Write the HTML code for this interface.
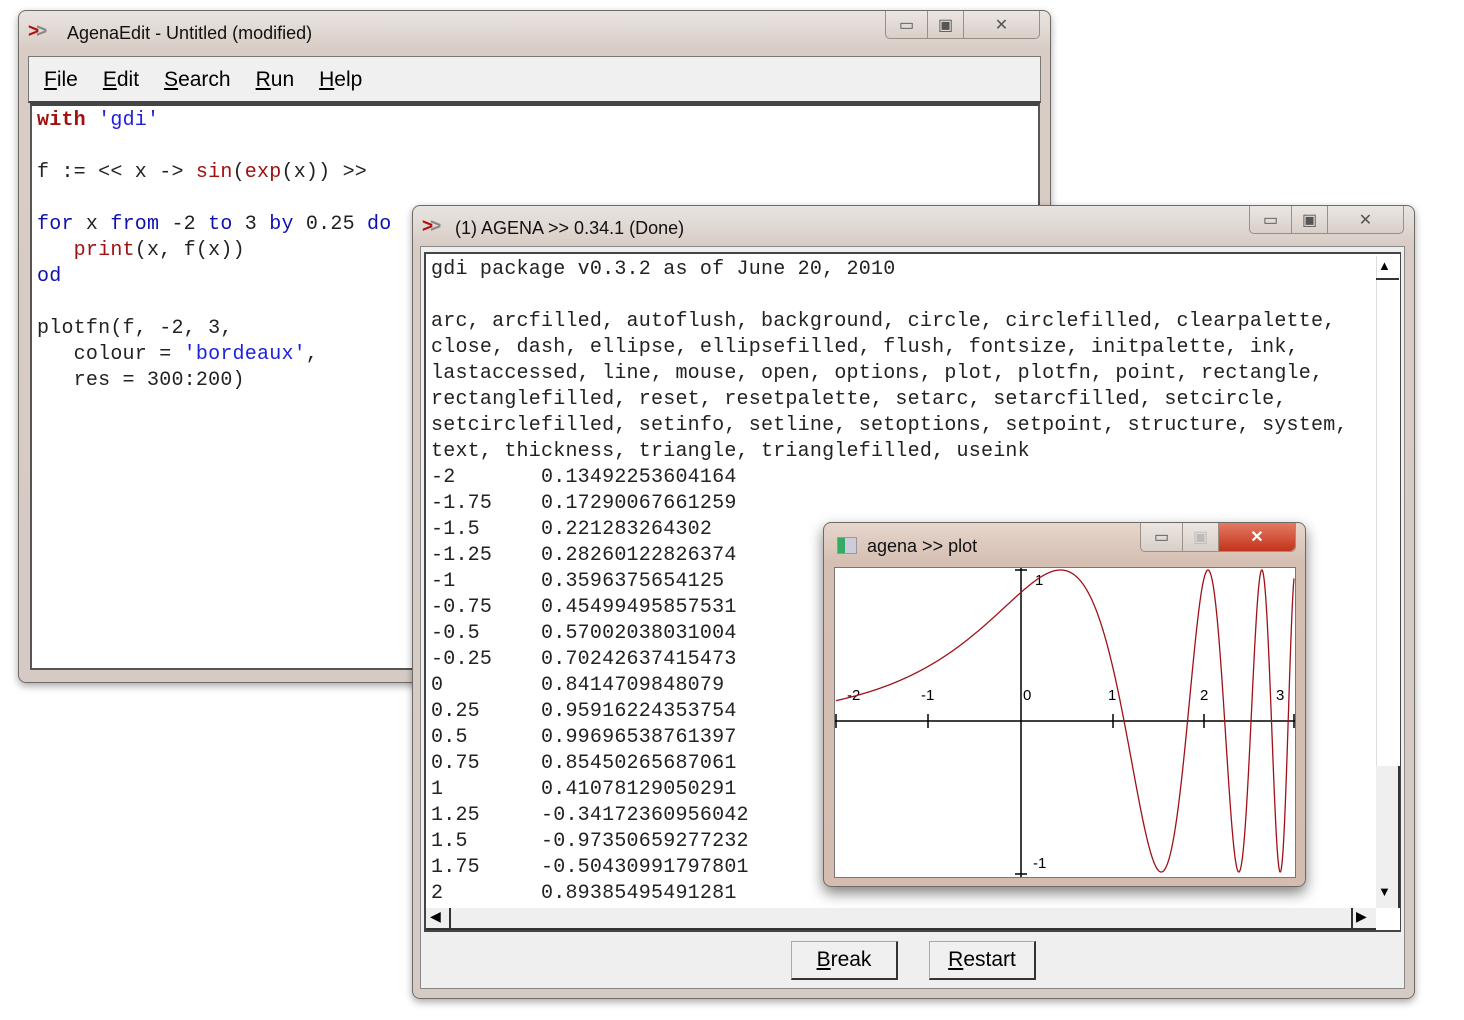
<!DOCTYPE html>
<html><head><meta charset="utf-8"><style>
*{margin:0;padding:0;box-sizing:border-box}
body{width:1464px;height:1020px;background:#fff;position:relative;overflow:hidden;font-family:"Liberation Sans",sans-serif}
.win{position:absolute;border:1px solid #6e6a66;border-radius:8px;background:linear-gradient(#e9e4e0,#d8ccc5 40px,#d6cbc4);box-shadow:0 3px 8px rgba(0,0,0,.35)}
.title{position:absolute;font-size:18px;color:#111}
.logo{position:absolute;font-weight:bold;font-size:19px;letter-spacing:-3px}
.logo b{color:#b01010}.logo i{font-style:normal;color:#888}
.ctl{position:absolute;height:28px;border:1px solid #9a9088;border-top:none;border-radius:0 0 5px 5px;background:linear-gradient(#ece6e2,#d9cfc9);display:flex}
.ctl div{border-right:1px solid #9a9088;display:flex;align-items:center;justify-content:center;font-size:16px;color:#555}
.ctl div:last-child{border-right:none}
.mono{font-family:"Liberation Mono",monospace;font-size:20px;line-height:26px;white-space:pre;color:#222;letter-spacing:0.22px}
.kw{color:#1010b0}.fn{color:#a01010}.st{color:#2020e0}
u{text-decoration:underline}
.menu span{margin-right:25px}
</style></head><body>

<!-- Editor window -->
<div class="win" style="left:18px;top:10px;width:1033px;height:673px">
  <div class="logo" style="left:9px;top:10px"><b>&gt;</b><i>&gt;</i></div>
  <div class="title" style="left:48px;top:12px">AgenaEdit - Untitled (modified)</div>
  <div class="ctl" style="left:866px;top:0;width:155px"><div style="width:42px">▭</div><div style="width:36px">▣</div><div style="flex:1">✕</div></div>
  <div class="menu" style="position:absolute;left:9px;top:45px;width:1013px;height:47px;background:#f0f0f0;border:1px solid #777;border-bottom:2px solid #444;font-size:21px;padding:11px 0 0 15px">
    <span><u>F</u>ile</span><span><u>E</u>dit</span><span><u>S</u>earch</span><span><u>R</u>un</span><span><u>H</u>elp</span>
  </div>
  <div style="position:absolute;left:11px;top:92px;width:1010px;height:567px;background:#fff;border:2px solid #555;border-top:3px solid #444"></div>
  <div class="mono" style="position:absolute;left:18px;top:97px"><span class="fn" style="font-weight:bold">with</span> <span class="st">'gdi'</span>

f := &lt;&lt; x -&gt; <span class="fn">sin</span>(<span class="fn">exp</span>(x)) &gt;&gt;

<span class="kw">for</span> x <span class="kw">from</span> -2 <span class="kw">to</span> 3 <span class="kw">by</span> 0.25 <span class="kw">do</span>
   <span class="fn">print</span>(x, f(x))
<span class="kw">od</span>

plotfn(f, -2, 3,
   colour = <span class="st">'bordeaux'</span>,
   res = 300:200)</div>
</div>

<!-- Agena window -->
<div class="win" style="left:412px;top:205px;width:1003px;height:794px">
  <div class="logo" style="left:9px;top:10px"><b>&gt;</b><i>&gt;</i></div>
  <div class="title" style="left:42px;top:12px">(1) AGENA &gt;&gt; 0.34.1 (Done)</div>
  <div class="ctl" style="left:836px;top:0;width:155px"><div style="width:42px">▭</div><div style="width:36px">▣</div><div style="flex:1">✕</div></div>
  <div style="position:absolute;left:7px;top:40px;width:985px;height:743px;background:#efefef;border:1px solid #888"></div>
  <div style="position:absolute;left:11px;top:46px;width:977px;height:680px;background:#fff;border:2px solid #444;border-right:1px solid #444"></div>
  <!-- vscroll -->
  <div style="position:absolute;left:963px;top:50px;width:23px;height:652px;background:#efefef"></div>
  <div style="position:absolute;left:963px;top:50px;width:23px;height:510px;background:#fff;border-left:1px solid #ddd"></div>
  <div style="position:absolute;left:965px;top:52px;font-size:13px">▲</div>
  <div style="position:absolute;left:963px;top:72px;width:23px;height:2px;background:#333"></div>
  <div style="position:absolute;left:965px;top:678px;font-size:13px">▼</div>
  <div style="position:absolute;left:985px;top:560px;width:2px;height:142px;background:#333"></div>
  <!-- hscroll -->
  <div style="position:absolute;left:13px;top:702px;width:950px;height:22px;background:#efefef;border-bottom:2px solid #333"></div>
  <div style="position:absolute;left:17px;top:702px;font-size:14px">◀</div>
  <div style="position:absolute;left:36px;top:702px;width:2px;height:22px;background:#333"></div>
  <div style="position:absolute;left:938px;top:702px;width:2px;height:22px;background:#333"></div>
  <div style="position:absolute;left:943px;top:702px;font-size:14px">▶</div>
  <div class="mono" style="position:absolute;left:18px;top:51px">gdi package v0.3.2 as of June 20, 2010

arc, arcfilled, autoflush, background, circle, circlefilled, clearpalette,
close, dash, ellipse, ellipsefilled, flush, fontsize, initpalette, ink,
lastaccessed, line, mouse, open, options, plot, plotfn, point, rectangle,
rectanglefilled, reset, resetpalette, setarc, setarcfilled, setcircle,
setcirclefilled, setinfo, setline, setoptions, setpoint, structure, system,
text, thickness, triangle, trianglefilled, useink
-2       0.13492253604164
-1.75    0.17290067661259
-1.5     0.221283264302
-1.25    0.28260122826374
-1       0.3596375654125
-0.75    0.45499495857531
-0.5     0.57002038031004
-0.25    0.70242637415473
0        0.8414709848079
0.25     0.95916224353754
0.5      0.99696538761397
0.75     0.85450265687061
1        0.41078129050291
1.25     -0.34172360956042
1.5      -0.97350659277232
1.75     -0.50430991797801
2        0.89385495491281</div>
  <div style="position:absolute;left:378px;top:735px;width:107px;height:39px;border:1px solid #aaa;border-right:2px solid #333;border-bottom:2px solid #333;background:#f0f0f0;font-size:21px;text-align:center;line-height:36px"><u>B</u>reak</div>
  <div style="position:absolute;left:516px;top:735px;width:107px;height:39px;border:1px solid #aaa;border-right:2px solid #333;border-bottom:2px solid #333;background:#f0f0f0;font-size:21px;text-align:center;line-height:36px"><u>R</u>estart</div>
</div>

<!-- Plot window -->
<div class="win" style="left:823px;top:522px;width:483px;height:365px;background:linear-gradient(#e6d6cc,#d5bfb2 40px,#d4bdaf);box-shadow:0 6px 14px rgba(0,0,0,.5)">
  <div style="position:absolute;left:13px;top:14px;width:20px;height:17px;background:linear-gradient(90deg,#3a6 0 40%,#ccd 40%);border:1px solid #999"></div>
  <div class="title" style="left:43px;top:13px">agena &gt;&gt; plot</div>
  <div class="ctl" style="left:316px;top:0;width:156px;height:29px"><div style="width:42px">▭</div><div style="width:36px;color:#bbb">▣</div><div style="flex:1;background:linear-gradient(#e47a62,#c2331c);color:#fff;font-weight:bold;border-radius:0 0 5px 0">✕</div></div>
  <div style="position:absolute;left:10px;top:44px;width:462px;height:311px;background:#fff;border:1px solid #777"></div>
  <svg style="position:absolute;left:11px;top:45px" width="460" height="309">
    <g stroke="#000" stroke-width="1.5" fill="none">
      <line x1="0" y1="153" x2="460" y2="153"/>
      <line x1="186" y1="0" x2="186" y2="309"/>
      <line x1="180" y1="2" x2="192" y2="2"/><line x1="180" y1="306" x2="192" y2="306"/>
      <line x1="1" y1="146" x2="1" y2="160"/><line x1="93" y1="146" x2="93" y2="160"/><line x1="278" y1="146" x2="278" y2="160"/><line x1="369" y1="146" x2="369" y2="160"/><line x1="459" y1="146" x2="459" y2="160"/>
    </g>
    <g font-family="Liberation Sans,sans-serif" font-size="15" fill="#000">
      <text x="12" y="132">-2</text><text x="86" y="132">-1</text><text x="188" y="132">0</text><text x="273" y="132">1</text><text x="365" y="132">2</text><text x="441" y="132">3</text>
      <text x="200" y="17">1</text><text x="198" y="300">-1</text>
    </g>
    <path id="crv" fill="none" stroke="#a01018" stroke-width="1.3"/>
  </svg>
</div>
<script>
(function(){var d="";for(var i=0;i<=3000;i++){var x=-2+5*i/3000;var px=1+(x+2)*91.6;var py=153-Math.sin(Math.exp(x))*151;d+=(i?"L":"M")+px.toFixed(2)+" "+py.toFixed(2);}document.getElementById("crv").setAttribute("d",d);})();
</script>
</body></html>
